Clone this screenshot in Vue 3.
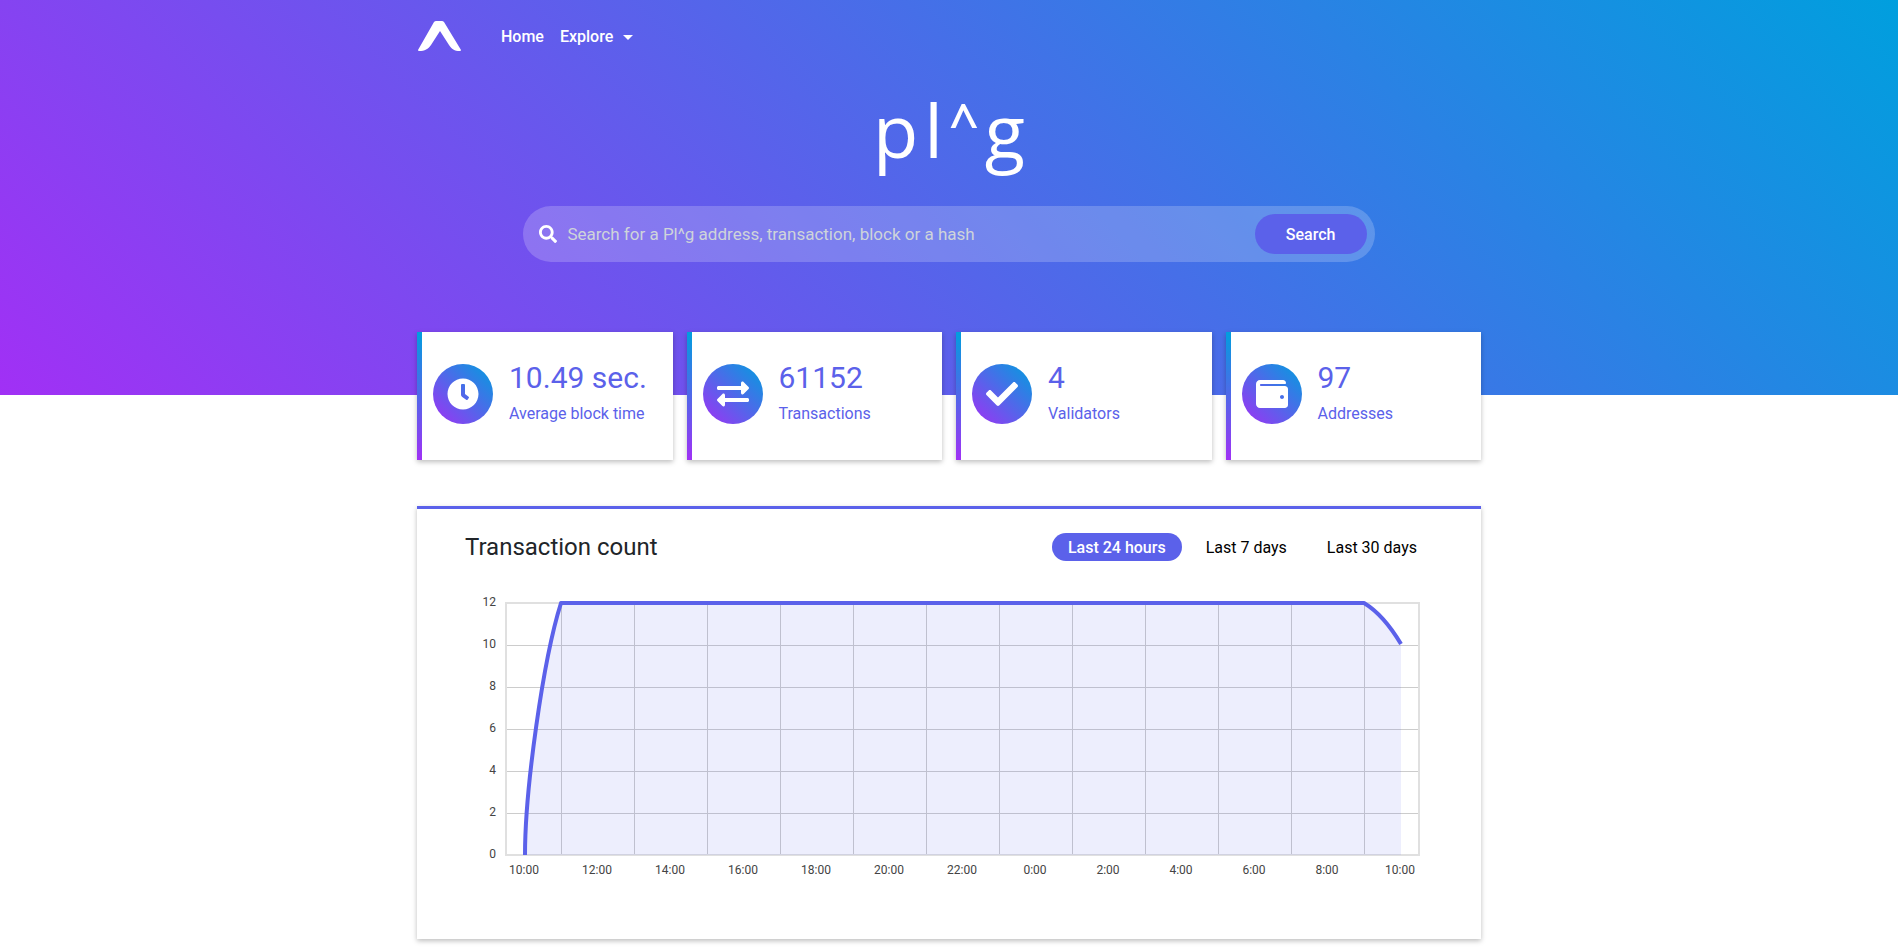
<script setup>
import { ref } from 'vue'

const query = ref('')
const ranges = ['Last 24 hours', 'Last 7 days', 'Last 30 days']
const active = ref(0)

const stats = [
  {
    value: '10.49 sec.',
    label: 'Average block time',
    icon: 'M256,8C119,8,8,119,8,256S119,504,256,504,504,393,504,256,393,8,256,8Zm92.49,313h0l-20,25a16,16,0,0,1-22.49,2.5h0l-67-49.72a40,40,0,0,1-15-31.23V112a16,16,0,0,1,16-16h32a16,16,0,0,1,16,16V256l58,42.5A16,16,0,0,1,348.49,321Z'
  },
  {
    value: '61152',
    label: 'Transactions',
    icon: 'M0 168v-16c0-13.255 10.745-24 24-24h360V80c0-21.367 25.899-32.042 40.971-16.971l80 80c9.372 9.373 9.372 24.569 0 33.941l-80 80C409.956 271.982 384 261.456 384 240v-48H24c-13.255 0-24-10.745-24-24zm488 152H128v-48c0-21.314-25.862-32.08-40.971-16.971l-80 80c-9.372 9.373-9.372 24.569 0 33.941l80 80C102.057 463.997 128 453.437 128 432v-48h360c13.255 0 24-10.745 24-24v-16c0-13.255-10.745-24-24-24z'
  },
  {
    value: '4',
    label: 'Validators',
    icon: 'M173.898 439.404l-166.4-166.4c-9.997-9.997-9.997-26.206 0-36.204l36.203-36.204c9.997-9.998 26.207-9.998 36.204 0L192 312.69 432.095 72.596c9.997-9.997 26.207-9.997 36.204 0l36.203 36.204c9.997 9.997 9.997 26.206 0 36.204l-294.4 294.401c-9.998 9.997-26.207 9.997-36.204-.001z'
  },
  {
    value: '97',
    label: 'Addresses',
    icon: 'M461.2 128H80c-8.84 0-16-7.16-16-16s7.16-16 16-16h384c8.84 0 16-7.16 16-16 0-26.51-21.49-48-48-48H64C28.65 32 0 60.65 0 96v320c0 35.35 28.65 64 64 64h397.2c28.02 0 50.8-21.53 50.8-48V176c0-26.47-22.78-48-50.8-48zM416 336c-17.67 0-32-14.33-32-32s14.33-32 32-32 32 14.33 32 32-14.33 32-32 32z'
  }
]

/* Plot area: 25 hourly slots, values from 0 to 12 */
const left = 41
const right = 954
const top = 9
const bottom = 261
const hours = ['10:00', '12:00', '14:00', '16:00', '18:00', '20:00', '22:00', '0:00', '2:00', '4:00', '6:00', '8:00', '10:00']
const xLabels = hours.map((text, i) => ({ text, x: 59 + i * 73 }))
const columns = Array.from({ length: 12 }, (_, i) => 96 + i * 73)
const rows = [12, 10, 8, 6, 4, 2, 0].map((text, i) => ({ text, y: top + i * 42 }))
const line = 'M60 261C60 196 78 66 96 9L899 9C914 18 927 35 936 50'
const area = line + 'L936 261Z'
</script>

<template>
  <div class="page">
    <header class="hero">
      <nav class="container nav">
        <a class="brand" href="#" aria-label="Plug home">
          <svg width="44" height="30" viewBox="0 0 44 30"><path d="M19 0h6q1 0 2 1L44 29q0 1-1 1C37 30 35 28 32 24L23 10 14 24C11 28 8 30 2 30q-1 0-1-1L17 1q1-1 2-1z" fill="#fff" /></svg>
        </a>
        <a class="link" href="#">Home</a>
        <button class="link explore" type="button">Explore<span class="caret"></span></button>
      </nav>
      <h1 class="title"><span>p</span><span>l</span><span class="hat">^</span><span>g</span></h1>
      <div class="container">
        <form class="search" @submit.prevent>
          <label for="query" aria-label="Search">
            <svg width="18" height="18" viewBox="0 0 512 512"><path fill="#fff" d="M505 442.7L405.3 343c-4.5-4.5-10.6-7-17-7H372c27.6-35.3 44-79.7 44-128C416 93.1 322.9 0 208 0S0 93.1 0 208s93.1 208 208 208c48.3 0 92.7-16.4 128-44v16.3c0 6.4 2.5 12.5 7 17l99.7 99.7c9.4 9.4 24.6 9.4 33.9 0l28.3-28.3c9.4-9.4 9.4-24.6.1-34zM208 336c-70.7 0-128-57.2-128-128 0-70.7 57.2-128 128-128 70.7 0 128 57.2 128 128 0 70.7-57.2 128-128 128z" /></svg>
          </label>
          <input id="query" v-model="query" type="text" placeholder="Search for a Pl^g address, transaction, block or a hash" />
          <button type="submit">Search</button>
        </form>
      </div>
    </header>

    <main class="container">
      <section class="stats">
        <article v-for="stat in stats" :key="stat.label" class="stat">
          <span class="badge">
            <svg width="32" height="32" viewBox="0 0 512 512"><path :d="stat.icon" fill="#fff" /></svg>
          </span>
          <div class="figures">
            <strong>{{ stat.value }}</strong>
            <span>{{ stat.label }}</span>
          </div>
        </article>
      </section>

      <section class="panel">
        <div class="panel-head">
          <h2>Transaction count</h2>
          <div class="ranges">
            <button
              v-for="(range, i) in ranges"
              :key="range"
              type="button"
              :class="{ active: i === active }"
              @click="active = i"
            >{{ range }}</button>
          </div>
        </div>
        <svg class="chart" viewBox="0 0 968 290">
          <g class="grid">
            <line v-for="row in rows" :key="row.y" :x1="left" :x2="right" :y1="row.y + 0.5" :y2="row.y + 0.5" />
            <line v-for="x in columns" :key="x" :x1="x + 0.5" :x2="x + 0.5" :y1="top" :y2="bottom" />
          </g>
          <rect class="frame" :x="left" :y="top" :width="right - left" :height="bottom - top" />
          <path class="area" :d="area" />
          <path class="line" :d="line" />
          <g class="labels">
            <text v-for="row in rows" :key="row.text" x="31" :y="row.y + 3" text-anchor="end">{{ row.text }}</text>
            <text v-for="label in xLabels" :key="label.x" :x="label.x" y="280" text-anchor="middle">{{ label.text }}</text>
          </g>
        </svg>
      </section>
    </main>
  </div>
</template>

<style>
body {
  margin: 0;
  background: #fff;
}
</style>

<style scoped>
.page {
  font-family: Roboto, "Liberation Sans", sans-serif;
  font-size: 16px;
  color: #5b61ea;
}
.page * {
  box-sizing: border-box;
}
svg {
  display: block;
}
button,
input {
  font: inherit;
  border: 0;
  background: none;
  padding: 0;
}
button {
  cursor: pointer;
}
.container {
  width: 100%;
  max-width: 1064px;
  margin: 0 auto;
}
.hero {
  padding-bottom: 133px;
  background: linear-gradient(45deg, #a130f5, #009fde);
}
.nav {
  display: flex;
  align-items: center;
  height: 72px;
}
.brand {
  margin-right: 40px;
}
.link {
  margin-right: 16px;
  padding-top: 2px;
  color: #fff;
  font-weight: 500;
  line-height: 24px;
  text-decoration: none;
}
.explore {
  display: flex;
  align-items: center;
  gap: 10px;
}
.caret {
  border: 5px solid transparent;
  border-top-color: #fff;
  border-bottom: 0;
}
.title {
  display: flex;
  justify-content: center;
  align-items: flex-start;
  gap: 6px;
  margin: 20px 0 38px;
  color: #fff;
  font-family: "Open Sans", sans-serif;
  font-size: 74px;
  font-weight: 400;
  line-height: 76px;
}
.hat {
  font-size: 52px;
  font-weight: 600;
  line-height: 60px;
}
.search {
  display: flex;
  align-items: center;
  width: 80%;
  height: 56px;
  margin: 0 auto;
  padding: 8px 8px 8px 16px;
  border-radius: 28px;
  background: rgba(255, 255, 255, 0.2);
}
.search input {
  flex: 1;
  min-width: 0;
  height: 40px;
  margin-left: 10px;
  color: #fff;
  font-size: 17px;
  outline: 0;
}
.search input::placeholder {
  color: #ced4da;
  opacity: 1;
}
.search button {
  width: 112px;
  height: 40px;
  border-radius: 20px;
  background: #5b61ea;
  color: #fff;
  font-weight: 500;
}
.stats {
  display: grid;
  grid-template-columns: repeat(4, 1fr);
  gap: 14px;
  margin-top: -63px;
}
.stat {
  display: flex;
  gap: 16px;
  height: 128px;
  padding: 0 0 0 11px;
  border-left: 5px solid;
  border-image: linear-gradient(to top, #a130f5, #009fde) 1;
  background: #fff;
  box-shadow: 0 2px 5px rgba(0, 0, 0, 0.26);
}
.badge {
  display: flex;
  align-items: center;
  justify-content: center;
  flex: none;
  width: 60px;
  height: 60px;
  margin-top: 32px;
  border-radius: 50%;
  background: linear-gradient(45deg, #a130f5, #009fde);
}
.figures {
  display: flex;
  flex-direction: column;
  gap: 6px;
  margin-top: 28px;
  white-space: nowrap;
}
.figures strong {
  font-size: 30px;
  font-weight: 400;
  line-height: 36px;
}
.figures span {
  line-height: 24px;
}
.panel {
  margin: 46px 0 11px;
  padding: 24px 48px 55px;
  border-top: 3px solid #5b61ea;
  background: #fff;
  box-shadow: 0 2px 5px rgba(0, 0, 0, 0.26);
}
.panel-head {
  display: flex;
  align-items: center;
  justify-content: space-between;
  margin-bottom: 33px;
}
.panel-head h2 {
  margin: 0;
  color: #212529;
  font-size: 24px;
  font-weight: 400;
  line-height: 28px;
}
.ranges {
  display: flex;
  gap: 8px;
}
.ranges button {
  height: 28px;
  padding: 0 16px;
  border-radius: 14px;
  color: #000;
}
.ranges button.active {
  background: #5b61ea;
  color: #fff;
  font-weight: 500;
}
.chart {
  width: 100%;
}
.grid line {
  stroke: #ccc;
}
.frame {
  fill: none;
  stroke: #e0e0e0;
  stroke-width: 2;
}
.area {
  fill: #5b61ea;
  fill-opacity: 0.11;
}
.line {
  fill: none;
  stroke: #5b61ea;
  stroke-width: 4;
  stroke-linejoin: round;
}
.labels {
  fill: #444;
  font-size: 12px;
}
</style>
